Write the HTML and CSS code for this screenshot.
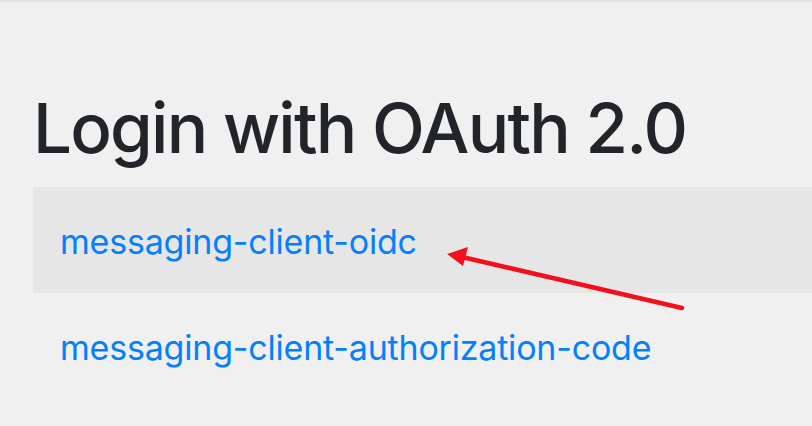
FILE: index.html
```html
<!DOCTYPE html>
<html lang="en">
<head>
<meta charset="utf-8">
<title>Login with OAuth 2.0</title>
<link rel="stylesheet" href="styles.css">
</head>
<body>
<div class="topbar"></div>
<main class="container">
  <h1 class="title">Login with OAuth 2.0</h1>
  <ul class="clients">
    <li class="client client-active"><a href="#">messaging-client-oidc</a></li>
    <li class="client"><a href="#">messaging-client-authorization-code</a></li>
  </ul>
</main>
<svg class="arrow" width="812" height="426" viewBox="0 0 812 426">
  <line x1="682" y1="308" x2="462" y2="257" stroke="#f3101c" stroke-width="4.5" stroke-linecap="round"/>
  <polygon points="447,254 468,247 463,266" fill="#f3101c"/>
</svg>
</body>
</html>
```
FILE: styles.css
```css
html, body {
  margin: 0;
  padding: 0;
}
body {
  background: #f0f0f0;
  font-family: Inter, "Noto Sans", sans-serif;
  width: 812px;
  height: 426px;
  overflow: hidden;
  position: relative;
}
.topbar {
  height: 2px;
  background: #e3e3e3;
}
.container {
  padding: 0 0 0 33px;
}
.title {
  margin: 84px 0 0 0;
  font-size: 69px;
  font-weight: 500;
  color: #212529;
  line-height: 84px;
  letter-spacing: -1.8px;
}
.clients {
  list-style: none;
  margin: 17px 0 0 0;
  padding: 0;
}
.client {
  box-sizing: border-box;
  height: 106px;
  display: flex;
  align-items: center;
  padding: 4px 0 0 27px;
}
.client-active {
  background: #e6e6e6;
}
.client a {
  color: #0480fc;
  text-decoration: none;
  font-size: 34px;
  letter-spacing: -0.2px;
  line-height: 40px;
}
.arrow {
  position: absolute;
  left: 0;
  top: 0;
  pointer-events: none;
}
```
